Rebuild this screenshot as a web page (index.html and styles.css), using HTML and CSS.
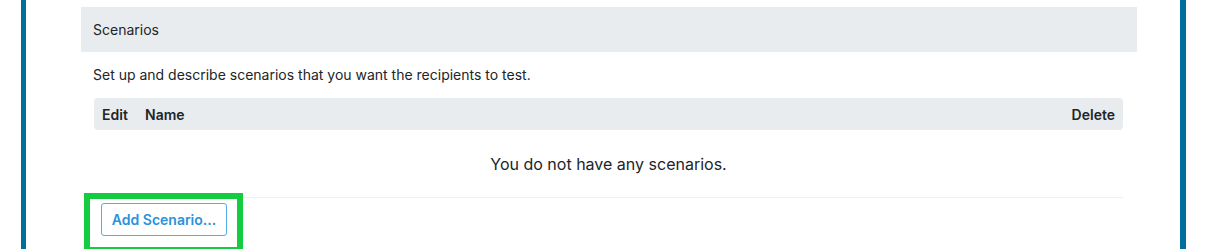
FILE: index.html
```html
<!DOCTYPE html>
<html>
<head>
<meta charset="utf-8">
<link rel="stylesheet" href="styles.css">
</head>
<body>
<div class="frame">
  <div class="card">
    <div class="card-header">Scenarios</div>
    <div class="card-body">
      <p class="desc">Set up and describe scenarios that you want the recipients to test.</p>
      <div class="thead">
        <span class="col-edit">Edit</span>
        <span class="col-name">Name</span>
        <span class="col-delete">Delete</span>
      </div>
      <div class="empty">You do not have any scenarios.</div>
      <div class="actions">
        <div class="highlight-wrap">
          <button class="btn-add">Add Scenario...</button>
          <div class="highlight"></div>
        </div>
      </div>
    </div>
  </div>
</div>
</body>
</html>
```

FILE: styles.css
```css
html, body {
  margin: 0;
  padding: 0;
  background: #ffffff;
  overflow: hidden;
}
body {
  font-family: "Inter", "Noto Sans", sans-serif;
  color: #212529;
  height: 249px;
}
.frame {
  margin-left: 21px;
  width: 1165px;
  height: 249px;
  border-left: 5px solid #006f9b;
  border-right: 6px solid #006f9b;
  padding: 7px 54px 0 55px;
  box-sizing: border-box;
}
.card {
  width: 1056px;
}
.card-header {
  background: #e9ecef;
  height: 45px;
  line-height: 45px;
  padding-left: 12px;
  font-size: 14px;
}
.card-body {
  padding: 0 14px 0 13px;
}
.desc {
  margin: 0;
  padding-top: 14px;
  height: 31px;
  box-sizing: border-box;
  font-size: 14px;
  line-height: 17px;
  margin-left: -1px;
}
.thead {
  display: flex;
  align-items: center;
  height: 32px;
  background: #e9ecef;
  border-radius: 4px;
  padding: 0 8px;
  font-size: 14px;
  font-weight: 600;
  margin-top: 15px;
}
.col-edit { width: 43px; }
.col-name { flex: 1; }
.empty {
  height: 67px;
  display: flex;
  align-items: center;
  justify-content: center;
  font-size: 16px;
  border-bottom: 1px solid #f0f0f0;
}
.actions {
  padding: 5px 0 0 7px;
}
.highlight-wrap {
  position: relative;
  display: inline-block;
}
.btn-add {
  display: block;
  width: 126px;
  height: 33px;
  background: #fff;
  border: 1px solid #54aee8;
  border-radius: 3px;
  color: #2a92dc;
  font-family: "Inter", "Noto Sans", sans-serif;
  font-weight: 600;
  font-size: 14px;
  padding: 0;
}
.highlight {
  position: absolute;
  left: -17px;
  top: -10px;
  width: 159px;
  height: 60px;
  border: 6px solid #13cc40;
  box-sizing: border-box;
  pointer-events: none;
}
```
